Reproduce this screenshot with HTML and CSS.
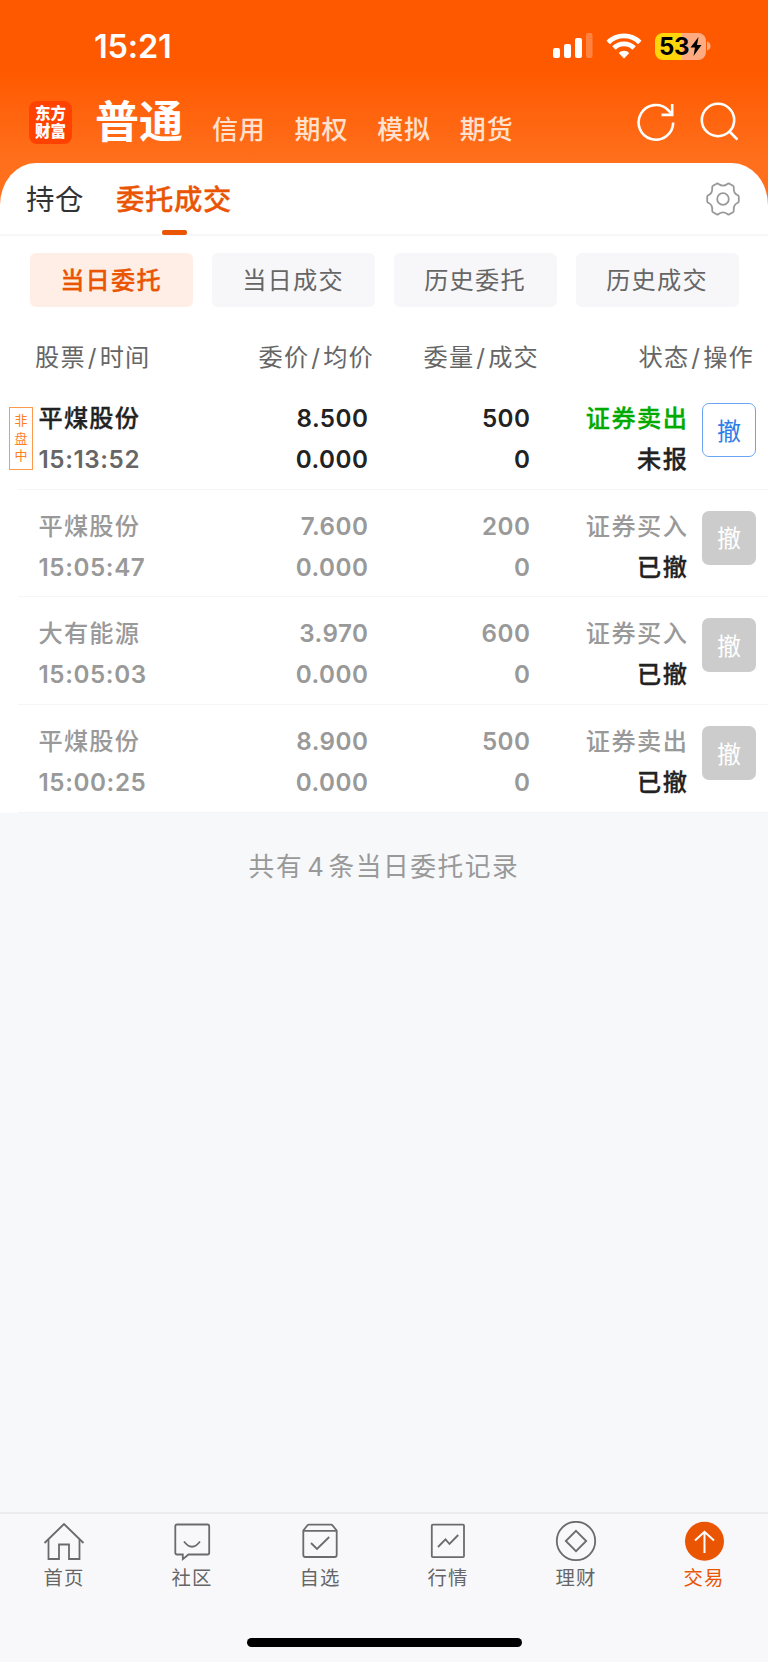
FILE: index.html
```
<!DOCTYPE html>
<html lang="zh-CN">

<head>
    <meta charset="UTF-8">
    <meta name="viewport" content="width=device-width, initial-scale=1.0">
    <title>委托成交</title>
    <link rel="stylesheet" href="styles.css">
</head>

<body>
    <header class="header">
        <div class="status-bar">
            <span class="clock">15:21</span>
            <div class="status-icons">
                <svg class="signal" width="40" height="26" viewBox="0 0 40 26" fill="#fff">
                    <rect x="0" y="15" width="7" height="10" rx="2" />
                    <rect x="11" y="11" width="7" height="14" rx="2" />
                    <rect x="22" y="5" width="7" height="20" rx="2" />
                    <rect x="33" y="0" width="6.5" height="25" rx="2" opacity="0.25" />
                </svg>
                <svg class="wifi" width="36" height="26" viewBox="0 0 36 26" fill="none" stroke="#fff" stroke-width="4.9">
                    <path d="M2.2 9.4A22.5 22.5 0 0 1 33.8 9.4" />
                    <path d="M7.9 15A14.5 14.5 0 0 1 28.1 15" />
                    <path d="M12.7 20A7.6 7.6 0 0 1 23.3 20L18 25.4Z" fill="#fff" stroke="none" />
                </svg>
                <div class="battery">
                    <span>53</span>
                    <svg width="12" height="19" viewBox="0 0 12 19">
                        <path d="M8.5 0L0.5 10.5H5L3.5 19L11.5 8H7Z" fill="#000" />
                    </svg>
                </div>
                <svg class="battery-tip" width="4" height="10" viewBox="0 0 4 10">
                    <path d="M0 0.5Q3.5 1.5 3.5 5T0 9.5Z" fill="#ffab82" />
                </svg>
            </div>
        </div>
        <nav class="account-nav">
            <div class="logo">东方<br>财富</div>
            <a class="account active">普通</a>
            <a class="account">信用</a>
            <a class="account">期权</a>
            <a class="account">模拟</a>
            <a class="account">期货</a>
            <div class="actions">
                <svg width="38" height="40" viewBox="0 0 38 40" fill="none" stroke="#fff" stroke-width="2.6">
                    <path d="M36.2 20.5A17.3 17.3 0 1 1 31.5 8.5L35 12.4" />
                    <path d="M35.2 2V12.9H24.5" />
                </svg>
                <svg width="38" height="40" viewBox="0 0 38 40" fill="none" stroke="#fff" stroke-width="2.6">
                    <circle cx="18" cy="18" r="16.2" />
                    <path d="M29 29L37.4 37.6" />
                </svg>
            </div>
        </nav>
    </header>

    <main class="sheet">
        <div class="tabs">
            <a class="tab">持仓</a>
            <a class="tab active">委托成交</a>
            <svg class="gear" width="34" height="34" viewBox="0 0 34 34" fill="none" stroke="#999" stroke-width="1.8" stroke-linejoin="round">
                <path d="M10.6 1.7Q11.8 1.2 12.6 2Q17 5.4 21.4 2Q22.2 1.2 23.4 1.7L27 3.8Q28 4.5 27.8 5.6Q27.2 11.2 31.7 13.2Q32.7 13.6 32.8 14.8V19.2Q32.7 20.4 31.7 20.8Q27.2 22.8 27.8 28.4Q28 29.5 27 30.2L23.4 32.3Q22.2 32.8 21.4 32Q17 28.6 12.6 32Q11.8 32.8 10.6 32.3L7 30.2Q6 29.5 6.2 28.4Q6.8 22.8 2.3 20.8Q1.3 20.4 1.2 19.2V14.8Q1.3 13.6 2.3 13.2Q6.8 11.2 6.2 5.6Q6 4.5 7 3.8Z" />
                <circle cx="17" cy="17" r="5.8" />
            </svg>
        </div>

        <div class="filters">
            <button class="filter active">当日委托</button>
            <button class="filter">当日成交</button>
            <button class="filter">历史委托</button>
            <button class="filter">历史成交</button>
        </div>

        <div class="table-head">
            <span>股票<i>/</i>时间</span>
            <span>委价<i>/</i>均价</span>
            <span>委量<i>/</i>成交</span>
            <span>状态<i>/</i>操作</span>
        </div>

        <div class="order pending">
            <div class="badge">非<br>盘<br>中</div>
            <div class="cell"><span>平煤股份</span><span class="time">15:13:52</span></div>
            <div class="cell num"><span>8.500</span><span>0.000</span></div>
            <div class="cell num"><span>500</span><span>0</span></div>
            <div class="cell state"><span class="sell">证券卖出</span><span class="result">未报</span></div>
            <button class="cancel">撤</button>
        </div>
        <div class="order">
            <div class="cell"><span>平煤股份</span><span class="time">15:05:47</span></div>
            <div class="cell num"><span>7.600</span><span>0.000</span></div>
            <div class="cell num"><span>200</span><span>0</span></div>
            <div class="cell state"><span>证券买入</span><span class="result">已撤</span></div>
            <button class="cancel">撤</button>
        </div>
        <div class="order">
            <div class="cell"><span>大有能源</span><span class="time">15:05:03</span></div>
            <div class="cell num"><span>3.970</span><span>0.000</span></div>
            <div class="cell num"><span>600</span><span>0</span></div>
            <div class="cell state"><span>证券买入</span><span class="result">已撤</span></div>
            <button class="cancel">撤</button>
        </div>
        <div class="order">
            <div class="cell"><span>平煤股份</span><span class="time">15:00:25</span></div>
            <div class="cell num"><span>8.900</span><span>0.000</span></div>
            <div class="cell num"><span>500</span><span>0</span></div>
            <div class="cell state"><span>证券卖出</span><span class="result">已撤</span></div>
            <button class="cancel">撤</button>
        </div>
    </main>

    <p class="summary">共有<b>4</b>条当日委托记录</p>

    <footer class="tabbar">
        <div class="tabbar-items">
            <a class="tabbar-item">
                <svg viewBox="0 0 42 42">
                    <path d="M1.5 22L21 3L40.5 22" />
                    <path d="M5.5 18.5V38H16V23.5H26V38H36.5V18.5" />
                </svg>
                <span>首页</span>
            </a>
            <a class="tabbar-item">
                <svg viewBox="0 0 42 42">
                    <path d="M6 3.5H36.5Q38.2 3.5 38.2 5.2V31.8Q38.2 33.5 36.5 33.5H17.5L11.8 38.2V33.5H6Q4.3 33.5 4.3 31.8V5.2Q4.3 3.5 6 3.5Z" />
                    <path d="M13 20.5Q21 31 29 20.5" />
                </svg>
                <span>社区</span>
            </a>
            <a class="tabbar-item">
                <svg viewBox="0 0 42 42">
                    <path d="M4.3 9.5L8.5 4.3Q9 3.7 10 3.7H32Q33 3.7 33.5 4.3L37.7 9.5V34Q37.7 36 35.7 36H6.3Q4.3 36 4.3 34ZM4.3 9.8H37.7" />
                    <path d="M12 22L18 28L30.2 16" />
                </svg>
                <span>自选</span>
            </a>
            <a class="tabbar-item">
                <svg viewBox="0 0 42 42">
                    <rect x="4.8" y="3.7" width="32.2" height="32.4" rx="1" />
                    <path d="M11 26L18.5 18.3L22.5 23L31.2 14" />
                </svg>
                <span>行情</span>
            </a>
            <a class="tabbar-item">
                <svg viewBox="0 0 42 42">
                    <circle cx="21" cy="20" r="19.2" />
                    <path d="M21 9.8L31.2 20L21 30.2L10.8 20Z" />
                </svg>
                <span>理财</span>
            </a>
            <a class="tabbar-item active">
                <svg viewBox="0 0 42 42">
                    <circle class="disc" cx="21.5" cy="20.3" r="19.5" />
                    <path class="arrow" d="M21.5 32V11M12 19.5L21.5 10.8L31 19.5" />
                </svg>
                <span>交易</span>
            </a>
        </div>
        <div class="home-indicator"></div>
    </footer>
</body>

</html>
```

FILE: styles.css
```
* {
    box-sizing: border-box;
}

body {
    display: flex;
    flex-direction: column;
    height: 1662px;
    margin: 0;
    background: #f7f8fa;
    color: #222;
    font-family: Inter, "Noto Sans CJK SC", sans-serif;
}

button {
    padding: 0;
    border: none;
    font-family: inherit;
}

/* header */
.header {
    height: 207px;
    background: linear-gradient(#ff5900 70px, #ff6f1c 160px);
    color: #fff;
}

.status-bar {
    display: flex;
    justify-content: space-between;
    align-items: center;
    height: 92px;
    padding: 0 57px 0 94px;
}

.clock {
    padding-top: 2px;
    font-size: 32.5px;
    font-weight: 600;
    line-height: 40px;
    letter-spacing: -0.2px;
}

.status-icons {
    display: flex;
    align-items: center;
}

.wifi {
    margin-left: 13px;
}

.battery {
    display: flex;
    align-items: center;
    justify-content: center;
    gap: 1px;
    width: 51px;
    height: 27px;
    margin-left: 13px;
    border-radius: 8px;
    background: linear-gradient(90deg, #ffd60a 53%, #ffab82 53%);
    color: #000;
    font-size: 24px;
    font-weight: 700;
    line-height: 27px;
    letter-spacing: -0.5px;
}

.battery-tip {
    margin-left: 1px;
}

.account-nav {
    display: flex;
    align-items: center;
    height: 60px;
    padding: 0 30px 0 29px;
}

.logo {
    width: 43px;
    height: 43px;
    margin-right: 23px;
    padding-top: 4px;
    border-radius: 8px;
    background: #ff4200;
    font-size: 15.5px;
    font-weight: 900;
    line-height: 18px;
    text-align: center;
}

.account {
    margin: 15px 29px 0 0;
    color: #ffe1d0;
    font-size: 26px;
    font-weight: 500;
    line-height: 30px;
    letter-spacing: 0.8px;
}

.account.active {
    margin: 0 29px 0 0;
    color: #fff;
    font-size: 44px;
    font-weight: 700;
    line-height: 50px;
    letter-spacing: 0;
}

.actions {
    display: flex;
    gap: 25px;
    margin-left: auto;
}

/* white sheet */
.sheet {
    height: 649.5px;
    margin-top: -44px;
    border-radius: 36px 36px 0 0 / 42px 42px 0 0;
    background: #fff;
}

.tabs {
    display: flex;
    align-items: center;
    height: 73px;
    padding: 0 28px 0 26px;
    border-bottom: 2px solid #f7f7f9;
}

.tab {
    margin-right: 32px;
    padding-top: 2px;
    color: #333;
    font-size: 28.4px;
    line-height: 70px;
    letter-spacing: 0.6px;
}

.tab.active {
    position: relative;
    color: #ea5504;
    font-weight: 500;
    -webkit-text-stroke: 0.3px;
}

.tab.active::after {
    content: "";
    position: absolute;
    bottom: 0;
    left: 46px;
    width: 25px;
    height: 5px;
    border-radius: 2px;
    background: #ea5504;
}

.gear {
    margin-left: auto;
}

.filters {
    display: grid;
    grid-template-columns: repeat(4, 163px);
    justify-content: space-between;
    padding: 17px 29.5px 0;
}

.filter {
    height: 54px;
    padding-bottom: 3px;
    border-radius: 6px;
    background: #f7f7fa;
    color: #666;
    font-size: 24.2px;
    letter-spacing: 1.2px;
}

.filter.active {
    background: #ffeee6;
    color: #ea5504;
    font-weight: 500;
    -webkit-text-stroke: 0.3px;
}

.table-head {
    display: grid;
    grid-template-columns: 175px 164px 165px 1fr;
    height: 75px;
    padding: 0 14px 0 35px;
    color: #666;
    font-size: 24.2px;
    line-height: 101px;
    letter-spacing: 1.2px;
    text-align: right;
}

.table-head span:first-child {
    text-align: left;
}

.table-head i {
    margin: 0 2px;
    font-style: normal;
}

/* order rows */
.order {
    position: relative;
    display: grid;
    grid-template-columns: 166px 164px 162px 158px 54px;
    height: 107.7px;
    margin-left: 18px;
    padding: 16px 0 0 20.5px;
    border-bottom: 1.5px solid #f5f5f7;
    color: #999;
    font-size: 24.2px;
    font-weight: 500;
    line-height: 41px;
    letter-spacing: 1.2px;
}

.order.pending {
    color: #222;
}

.order.pending .time {
    color: #666;
}

.cell {
    display: flex;
    flex-direction: column;
}

.cell.num {
    align-items: flex-end;
    font-weight: 600;
    letter-spacing: 0.5px;
}

.cell.state {
    align-items: flex-end;
    letter-spacing: 1.5px;
}

.time {
    font-weight: 600;
    letter-spacing: 0.6px;
}

.pending .cell:not(.num) span:not(.time),
.result {
    -webkit-text-stroke: 0.3px;
}

.sell {
    color: #0a0;
}

.result {
    color: #222;
}

.cancel {
    width: 54px;
    height: 54px;
    margin: 5px 0 0 13.5px;
    padding-bottom: 2px;
    border-radius: 7px;
    background: #ccc;
    color: #fff;
    font-size: 24px;
}

.pending .cancel {
    border: 1.5px solid #6aa5f5;
    background: #fff;
    color: #2b7de9;
}

.badge {
    position: absolute;
    top: 25px;
    left: -9px;
    width: 24px;
    height: 63px;
    padding-top: 4px;
    border: 1px solid #ff9a4d;
    color: #ff7f1e;
    font-size: 13px;
    font-weight: 400;
    line-height: 17.5px;
    letter-spacing: 0;
    text-align: center;
}

.summary {
    margin: 37px 0 0;
    color: #999;
    font-size: 25.7px;
    line-height: 34px;
    letter-spacing: 1.6px;
    text-align: center;
}

.summary b {
    margin: 0 3px 0 4px;
    font-weight: 400;
}

/* bottom tab bar */
.tabbar {
    height: 150px;
    margin-top: auto;
    border-top: 2px solid #ebebed;
    background: #f8f8fb;
}

.tabbar-items {
    display: grid;
    grid-template-columns: repeat(6, 1fr);
    height: 124px;
    padding-top: 7px;
}

.tabbar-item {
    display: flex;
    flex-direction: column;
    align-items: center;
    color: #666;
    font-size: 19.4px;
    line-height: 31px;
    letter-spacing: 1.2px;
}

.tabbar-item svg {
    width: 42px;
    height: 42px;
    fill: none;
    stroke: #6b6b6b;
    stroke-width: 1.8;
}

.tabbar-item.active {
    color: #ea5504;
}

.tabbar-item .disc {
    fill: #ea5504;
    stroke: none;
}

.tabbar-item .arrow {
    stroke: #fff;
    stroke-width: 2;
}

.home-indicator {
    width: 275px;
    height: 9px;
    margin: 0 auto;
    border-radius: 5px;
    background: #000;
}
```
